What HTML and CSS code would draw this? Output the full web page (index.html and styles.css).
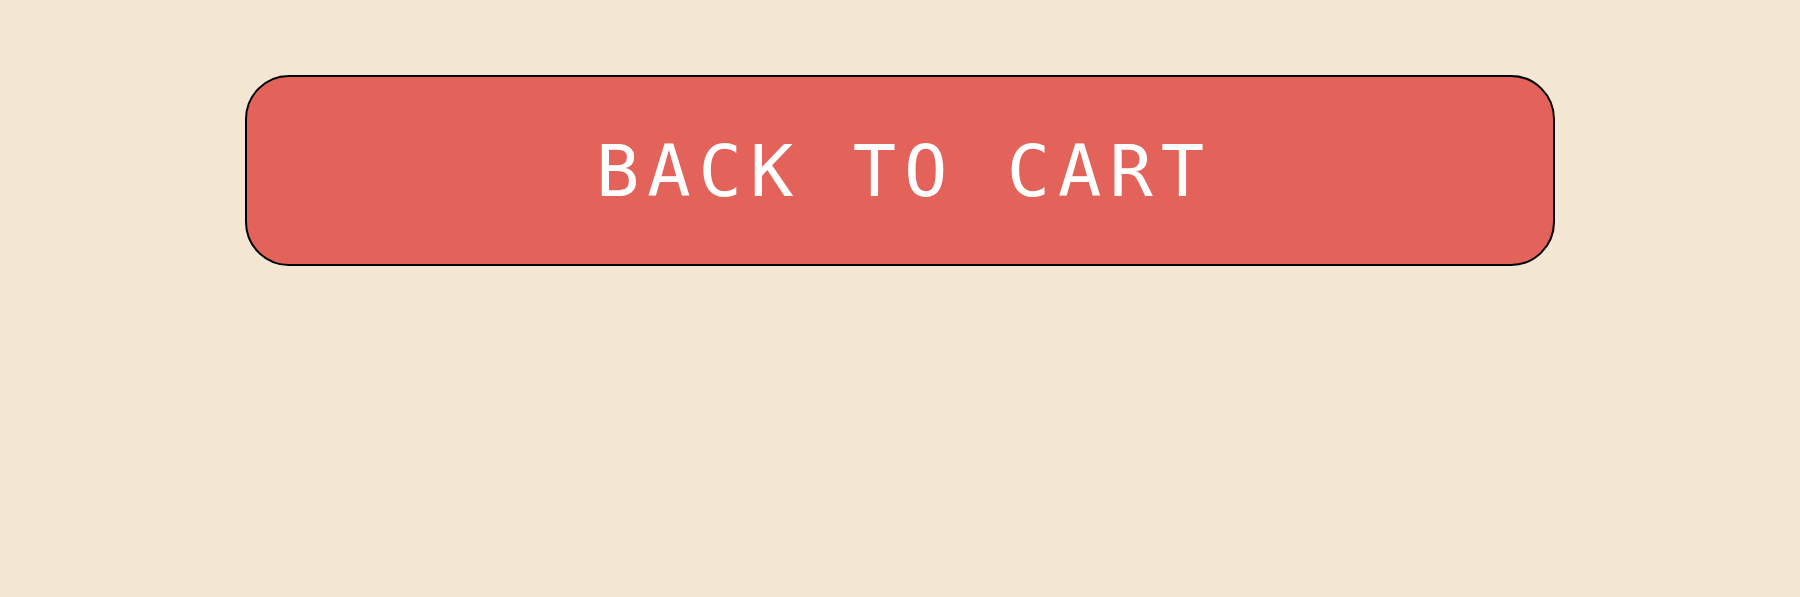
FILE: index.html
```html
<!DOCTYPE html>
<html lang="en">
<head>
    <meta charset="UTF-8">
    <meta name="viewport" content="width=device-width, initial-scale=1.0">
    <title>Back to cart</title>
    <link rel="stylesheet" href="styles.css">
</head>
<body>
    <div class="page">
        <a href="#" class="back-btn">Back to cart</a>
    </div>
</body>
</html>
```

FILE: styles.css
```css
body {
    margin: 0;
    padding: 0;
    background-color: #f3e7d3;
    font-family: "DejaVu Sans Mono", monospace;
}

.page {
    padding: 75px 245px 0;
}

.back-btn {
    display: flex;
    justify-content: center;
    align-items: center;
    height: 187px;
    padding-left: 8px;
    border: 2px solid #000;
    border-radius: 44px;
    background-color: #e3635a;
    color: #fff;
    font-size: 72px;
    letter-spacing: 8px;
    text-transform: uppercase;
    text-decoration: none;
}
```
